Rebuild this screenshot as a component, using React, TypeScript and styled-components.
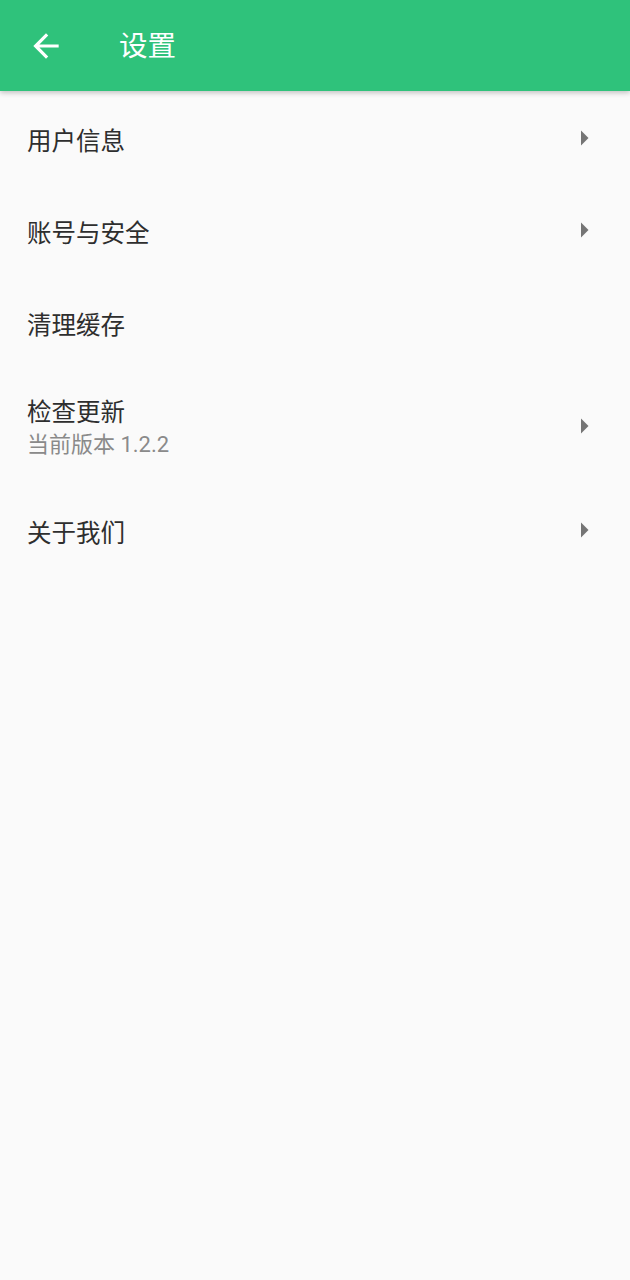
import React from "react";
import styled, { createGlobalStyle } from "styled-components";

const GlobalStyle = createGlobalStyle`
  html, body {
    margin: 0;
    padding: 0;
    background: #fafafa;
  }
  body {
    font-family: Roboto, "Noto Sans CJK SC", "Noto Sans", sans-serif;
  }
`;

type SettingItem = {
  title: string;
  subtitle?: string;
  arrow: boolean;
};

const items: SettingItem[] = [
  { title: "用户信息", arrow: true },
  { title: "账号与安全", arrow: true },
  { title: "清理缓存", arrow: false },
  { title: "检查更新", subtitle: "当前版本 1.2.2", arrow: true },
  { title: "关于我们", arrow: true },
];

function BackIcon() {
  return (
    <svg width="38" height="38" viewBox="0 0 24 24" fill="#ffffff">
      <path d="M20 11H7.83l5.59-5.59L12 4l-8 8 8 8 1.41-1.41L7.83 13H20v-2z" />
    </svg>
  );
}

function ArrowRight() {
  return (
    <svg width="36" height="36" viewBox="0 0 24 24" fill="#757575">
      <path d="M10 17l5-5-5-5v10z" />
    </svg>
  );
}

export default function App() {
  return (
    <Page>
      <GlobalStyle />
      <AppBar>
        <BackButton>
          <BackIcon />
        </BackButton>
        <BarTitle>设置</BarTitle>
      </AppBar>
      <List>
        {items.map((item) => (
          <Row key={item.title} tall={!!item.subtitle}>
            <TextBlock single={!item.subtitle}>
              <Title>{item.title}</Title>
              {item.subtitle ? <Subtitle>{item.subtitle}</Subtitle> : null}
            </TextBlock>
            {item.arrow ? (
              <Trailing>
                <ArrowRight />
              </Trailing>
            ) : null}
          </Row>
        ))}
      </List>
    </Page>
  );
}

const Page = styled.div`
  min-height: 1280px;
  background: #fafafa;
  display: flex;
  flex-direction: column;
`;

const AppBar = styled.header`
  height: 91px;
  background: #2fc27b;
  display: flex;
  align-items: center;
  padding-left: 27px;
  gap: 54px;
  box-shadow: 0 2px 5px rgba(0, 0, 0, 0.22);
  position: relative;
  z-index: 1;
`;

const BackButton = styled.div`
  width: 38px;
  height: 38px;
  display: flex;
  align-items: center;
  justify-content: center;
`;

const BarTitle = styled.h1`
  margin: 3px 0 0;
  color: #ffffff;
  font-size: 28.5px;
  font-weight: 400;
  line-height: 36px;
`;

const List = styled.div`
  display: flex;
  flex-direction: column;
  padding-top: 1px;
`;

const Row = styled.div<{ tall: boolean }>`
  height: ${(p) => (p.tall ? 116 : 92)}px;
  display: flex;
  align-items: center;
  justify-content: space-between;
  padding: 0 28px 0 27px;
  box-sizing: border-box;
`;

const TextBlock = styled.div<{ single: boolean }>`
  display: flex;
  flex-direction: column;
  padding-top: ${(p) => (p.single ? 8 : 3)}px;
`;

const Title = styled.div`
  font-size: 24.5px;
  line-height: 30px;
  color: #2e2e2e;
`;

const Subtitle = styled.div`
  font-size: 22px;
  line-height: 26px;
  color: #8a8a8a;
  margin-top: 4px;
`;

const Trailing = styled.div`
  width: 36px;
  height: 36px;
  display: flex;
`;
